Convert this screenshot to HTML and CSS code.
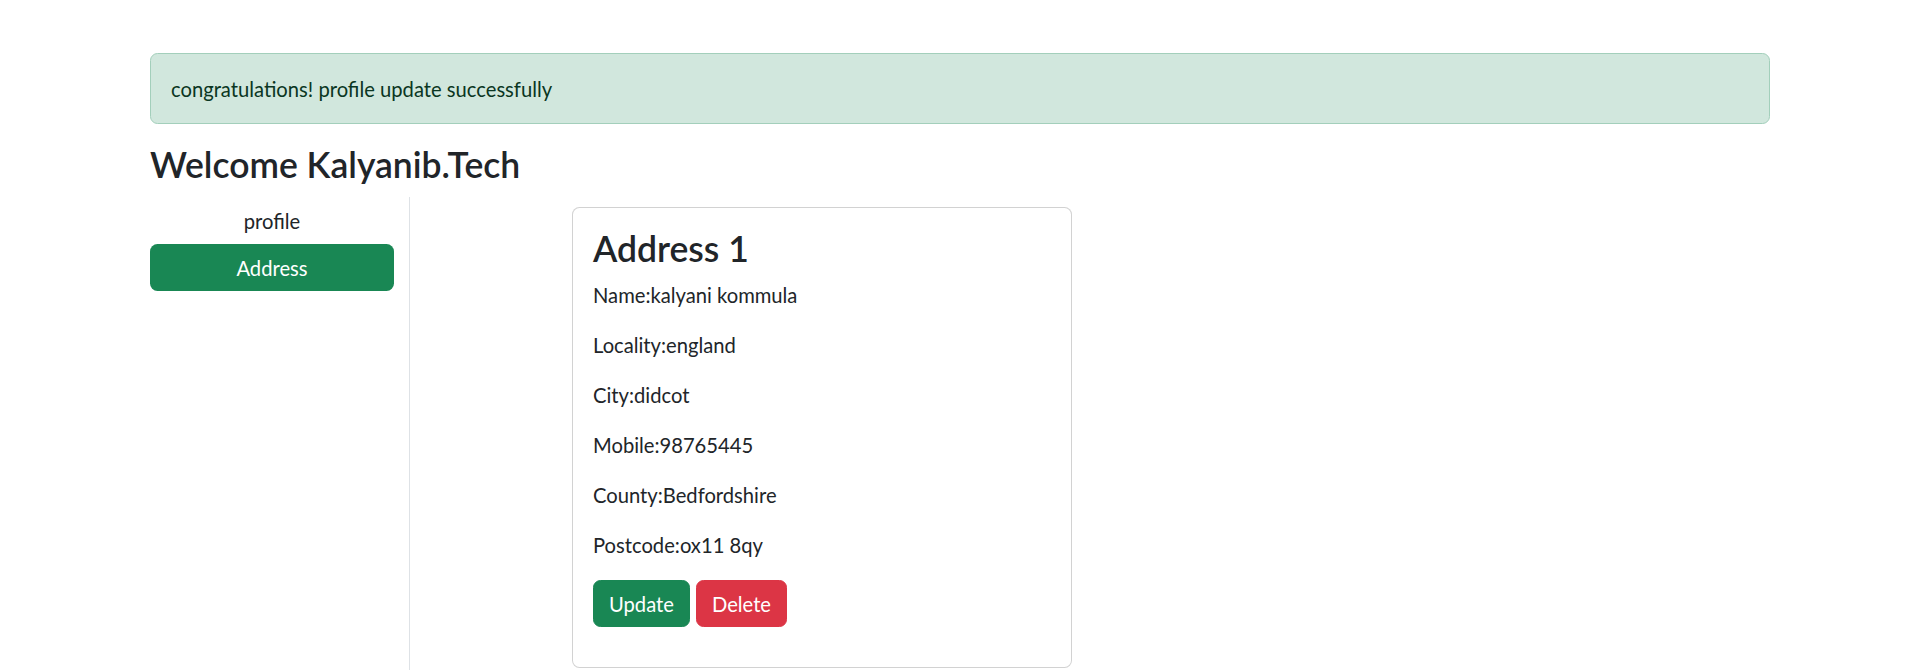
FILE: index.html
```html
<!DOCTYPE html>
<html lang="en">
<head>
<meta charset="utf-8">
<title>Profile</title>
<link rel="stylesheet" href="styles.css">
</head>
<body>
<div class="container">
  <div class="alert">congratulations! profile update successfully</div>
  <h3 class="welcome">Welcome Kalyanib.Tech</h3>
  <div class="row">
    <div class="side">
      <a class="btn nav-link">profile</a>
      <a class="btn nav-link active">Address</a>
    </div>
    <div class="main">
      <div class="card">
        <div class="card-body">
          <h3 class="card-title">Address 1</h3>
          <p>Name:kalyani kommula</p>
          <p>Locality:england</p>
          <p>City:didcot</p>
          <p>Mobile:98765445</p>
          <p>County:Bedfordshire</p>
          <p>Postcode:ox11 8qy</p>
          <div class="actions">
            <button class="btn btn-success">Update</button>
            <button class="btn btn-danger">Delete</button>
          </div>
        </div>
      </div>
    </div>
  </div>
</div>
</body>
</html>
```
FILE: styles.css
```css
* { box-sizing: border-box; }
html, body { margin: 0; padding: 0; }
body {
  font-family: Lato, "Open Sans", sans-serif;
  font-size: 20.2px;
  line-height: 30px;
  color: #212529;
  background: #fff;
}
.container {
  width: 1650px;
  margin: 0 auto;
  padding: 53px 15px 0;
}
.alert {
  background: #d1e7dd;
  border: 1px solid #a3cfbb;
  color: #0a3622;
  border-radius: 7.5px;
  padding: 19.5px 20px;
  margin-bottom: 20px;
}
h3 {
  font-size: 35.5px;
  line-height: 42px;
  font-weight: 600;
  margin: 0 0 10px;
  color: #212529;
}
.welcome { margin-bottom: 11px; }
.row {
  display: flex;
  margin: 0 -15px;
}
.side {
  width: 275px;
  flex: none;
  padding: 0 15px;
  border-right: 1px solid #dee2e6;
  display: flex;
  flex-direction: column;
}
.btn {
  display: inline-block;
  font-family: inherit;
  font-size: 20.2px;
  line-height: 30px;
  padding: 7.5px 15px;
  border: 1px solid transparent;
  border-radius: 7.5px;
  text-align: center;
  cursor: pointer;
}
.nav-link { color: #212529; display: block; }
.nav-link.active { background: #198754; color: #fff; }
.main {
  flex: 1;
  padding: 10px 15px 12px 162px;
}
.card {
  width: 500px;
  border: 1px solid rgba(0,0,0,.175);
  border-radius: 7.5px;
  background: #fff;
}
.card-body { padding: 20px; }
p { margin: 0 0 20px; }
.actions {
  display: flex;
  gap: 6px;
  margin-bottom: 20px;
}
.btn-success { background: #198754; border-color: #198754; color: #fff; }
.btn-danger { background: #dc3545; border-color: #dc3545; color: #fff; }
```
